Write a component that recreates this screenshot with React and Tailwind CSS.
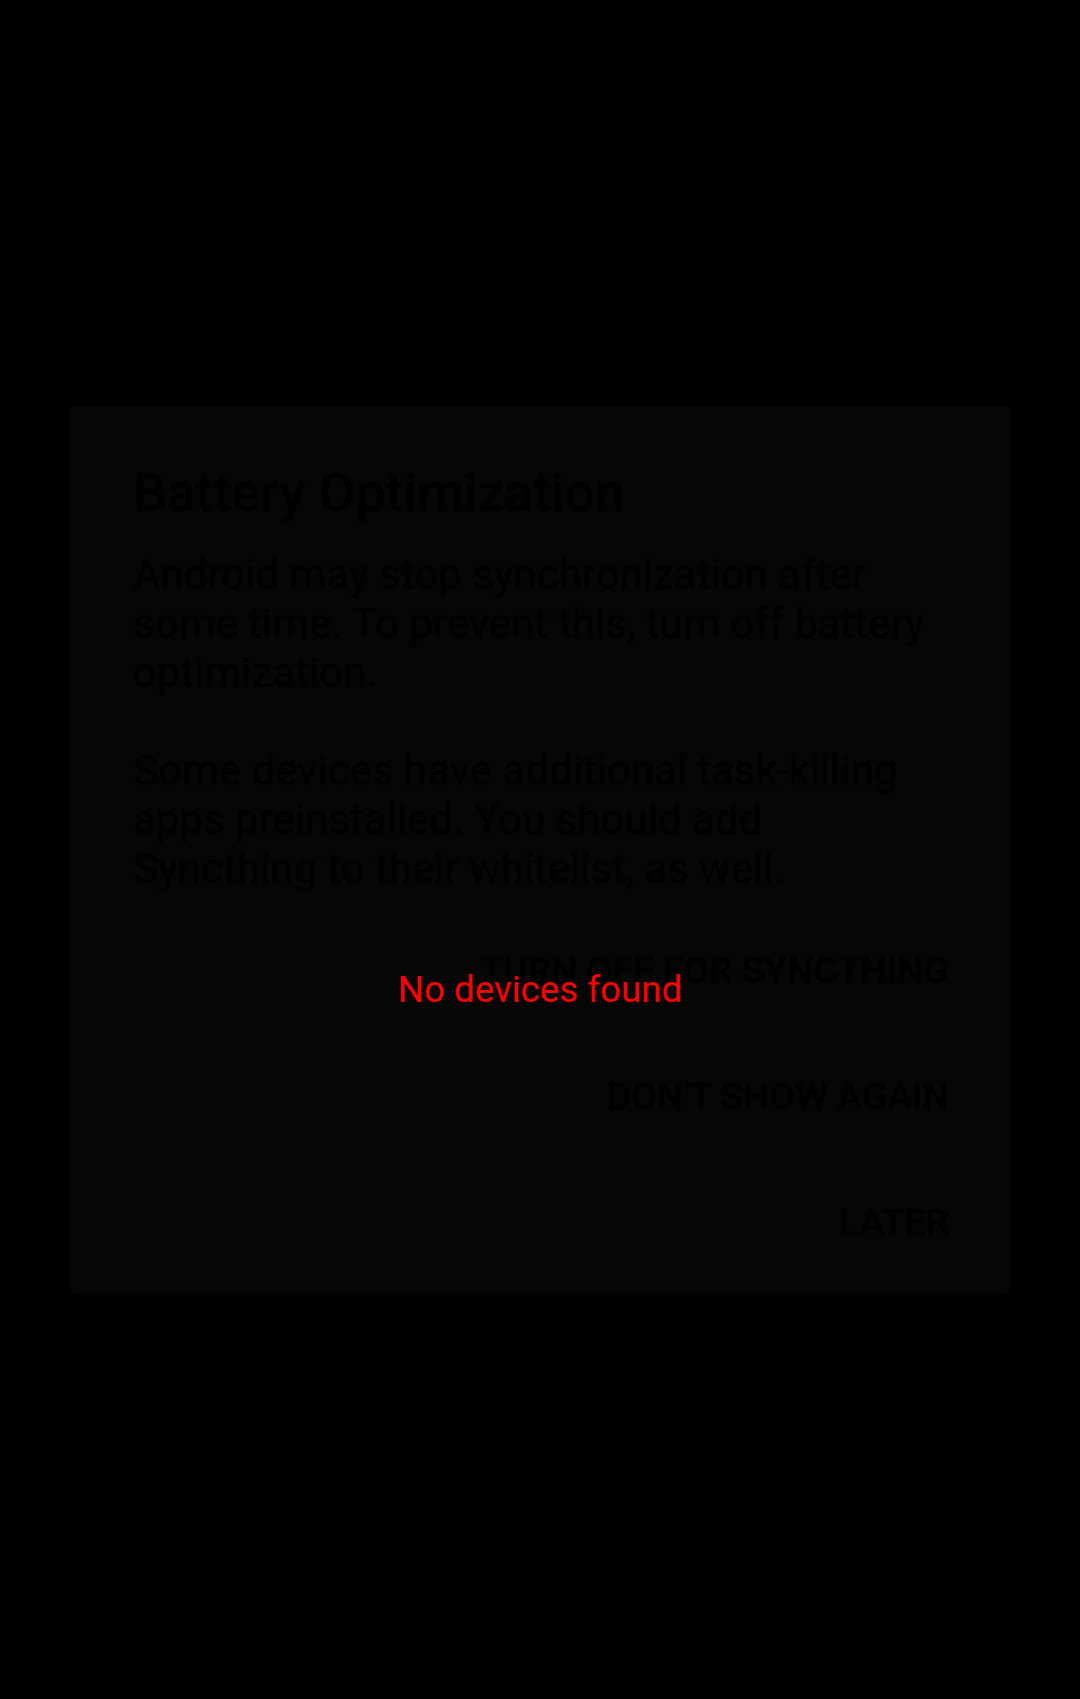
import React from 'react';

const buttons = ['TURN OFF FOR SYNCTHING', "DON'T SHOW AGAIN", 'LATER'];

function BatteryDialog() {
  return (
    <div className="w-[940px] rounded-[6px] bg-[#060606] pt-[56px] pb-[10px]">
      <h2 className="px-[63px] text-[53.5px] leading-[62.5px] font-medium text-black">
        Battery Optimization
      </h2>
      <div className="mt-[25.5px] px-[63px] text-[42px] leading-[49px] text-black">
        <p>
          Android may stop synchronization after some time. To prevent this,
          turn off battery optimization.
        </p>
        <p className="mt-[49px]">
          Some devices have additional task-killing apps preinstalled. You
          should add Syncthing to their whitelist, as well.
        </p>
      </div>
      <div className="mt-[14px] flex flex-col items-end pr-[61px]">
        {buttons.map((label) => (
          <button
            key={label}
            className="h-[126px] flex items-center text-[37.3px] leading-[44px] font-medium text-black"
          >
            {label}
          </button>
        ))}
      </div>
    </div>
  );
}

export default function App() {
  return (
    <div
      className="relative w-[1080px] h-[1699px] bg-black"
      style={{fontFamily: 'Roboto, "Noto Sans", sans-serif'}}
    >
      <div className="flex justify-center pt-[406px]">
        <BatteryDialog />
      </div>
      {/* empty-state label drawn over the dialog */}
      <div className="absolute left-0 right-0 top-[968px] text-center text-[36.7px] leading-[43px] text-[#ff0000]">
        No devices found
      </div>
    </div>
  );
}
